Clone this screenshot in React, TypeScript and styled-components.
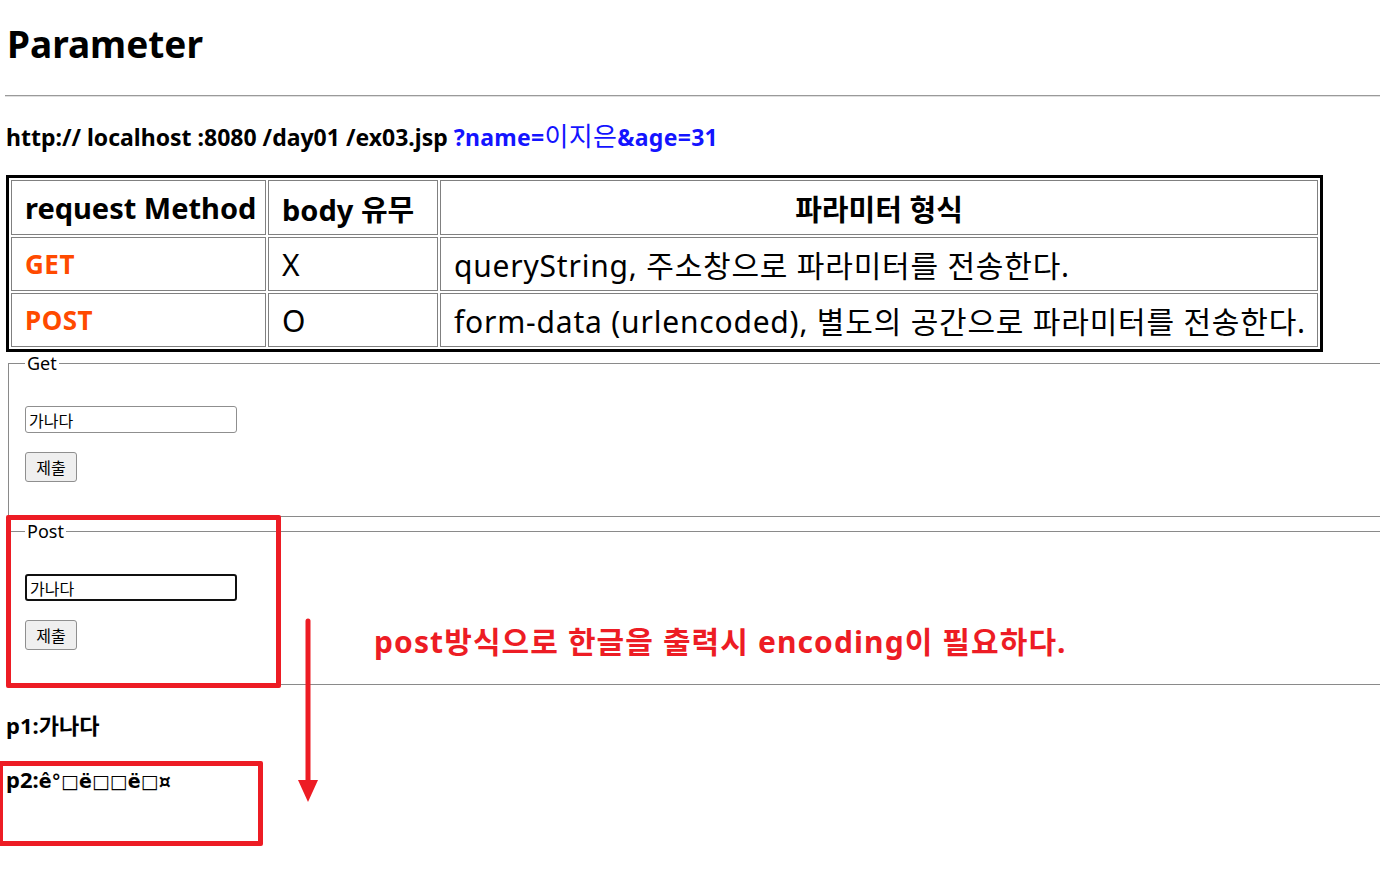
import React from "react";
import styled, { createGlobalStyle } from "styled-components";

const GlobalStyle = createGlobalStyle`
  html, body { margin: 0; padding: 0; background: #fff; }
  body {
    overflow: hidden;
    font-family: "Noto Sans", "Noto Sans CJK KR", sans-serif;
    color: #000;
  }
`;

const Page = styled.div`
  position: relative;
  width: 1380px;
  height: 876px;
  overflow: hidden;
  padding-left: 5px;
  box-sizing: border-box;
  display: flex;
  flex-direction: column;
`;

const Title = styled.h1`
  margin: 18px 0 0 2px;
  font-size: 37px;
  font-weight: 700;
  line-height: 52px;
`;

const Rule = styled.hr`
  margin: 25px 0 0 0;
  border: none;
  border-top: 1px solid #9a9a9a;
  border-bottom: 1px solid #e0e0e0;
  width: 1380px;
`;

const UrlLine = styled.div`
  margin: 23px 0 0 1px;
  font-size: 23px;
  font-weight: 700;
  line-height: 32px;
  white-space: pre;
`;

const Query = styled.span`
  color: #1414ff;
  letter-spacing: 0.3px;
`;

const QueryKo = styled.span`
  font-weight: 400;
  font-size: 26px;
`;

const Table = styled.table`
  margin: 22px 0 0 1px;
  border: 3px solid #000;
  border-spacing: 2px;
  width: 1317px;
  table-layout: fixed;
`;

const HeadCell = styled.th<{ $w?: number; $center?: boolean }>`
  border: 1px solid #808080;
  height: 55px;
  padding: 0 13px;
  font-size: 29px;
  font-weight: 700;
  text-align: ${(p) => (p.$center ? "center" : "left")};
  width: ${(p) => (p.$w ? `${p.$w}px` : "auto")};
  box-sizing: border-box;
  white-space: nowrap;
  overflow: hidden;
`;

const Cell = styled.td`
  border: 1px solid #808080;
  height: 54px;
  padding: 0 13px;
  font-size: 30px;
  font-weight: 400;
  white-space: nowrap;
  box-sizing: border-box;
  letter-spacing: 0.8px;
`;

const MethodCell = styled(Cell)`
  color: #ff4a00;
  font-weight: 700;
  font-size: 26px;
  letter-spacing: 0.5px;
`;

const Fieldset = styled.fieldset<{ $top: number }>`
  margin: ${(p) => p.$top}px 0 0 3px;
  width: 1420px;
  height: 164px;
  box-sizing: border-box;
  border: 1px solid #8a8a8a;
  padding: 0 16px;
  display: flex;
  flex-direction: column;
  align-items: flex-start;
`;

const Legend = styled.legend`
  padding: 0 2px;
  font-size: 18px;
  line-height: 20px;
`;

const TextInput = styled.input<{ $focused?: boolean }>`
  margin-top: 33px;
  width: 212px;
  height: 27px;
  box-sizing: border-box;
  border: ${(p) => (p.$focused ? "2px solid #101010" : "1px solid #8f8f8f")};
  border-radius: 3px;
  padding: 0 3px;
  font-family: "Noto Sans CJK KR", sans-serif;
  font-size: 16px;
  color: #000;
  outline: none;
  background: #fff;
`;

const SubmitButton = styled.button`
  margin-top: 19px;
  width: 52px;
  height: 30px;
  box-sizing: border-box;
  background: #efefef;
  border: 1px solid #8f8f8f;
  border-radius: 3px;
  font-family: "Noto Sans CJK KR", sans-serif;
  font-size: 16px;
  padding: 0;
  color: #000;
`;

const Result = styled.p<{ $top: number }>`
  margin: ${(p) => p.$top}px 0 0 1px;
  font-size: 22px;
  font-weight: 700;
  line-height: 30px;
`;

const Broken = styled.span`
  font-family: "DejaVu Sans", sans-serif;
  font-size: 19px;
`;

const Note = styled.div`
  position: absolute;
  left: 374px;
  top: 622px;
  color: #ed1c24;
  font-size: 30px;
  font-weight: 700;
  line-height: 40px;
  letter-spacing: 1.1px;
  white-space: nowrap;
`;

const Mark = styled.div<{ $x: number; $y: number; $w: number; $h: number }>`
  position: absolute;
  left: ${(p) => p.$x}px;
  top: ${(p) => p.$y}px;
  width: ${(p) => p.$w}px;
  height: ${(p) => p.$h}px;
  border: 5px solid #ed1c24;
  border-radius: 2px;
  box-sizing: border-box;
`;

const Arrow = styled.svg`
  position: absolute;
  left: 296px;
  top: 618px;
`;

export default function App() {
  return (
    <>
      <GlobalStyle />
      <Page>
        <Title>Parameter</Title>
        <Rule />
        <UrlLine>
          http:// localhost :8080 /day01 /ex03.jsp{" "}
          <Query>
            ?name=<QueryKo>이지은</QueryKo>&amp;age=31
          </Query>
        </UrlLine>
        <Table>
          <tbody>
            <tr>
              <HeadCell $w={255}>request Method</HeadCell>
              <HeadCell $w={170}>body 유무</HeadCell>
              <HeadCell $center>파라미터 형식</HeadCell>
            </tr>
            <tr>
              <MethodCell>GET</MethodCell>
              <Cell>X</Cell>
              <Cell>queryString, 주소창으로 파라미터를 전송한다.</Cell>
            </tr>
            <tr>
              <MethodCell>POST</MethodCell>
              <Cell>O</Cell>
              <Cell>form-data (urlencoded), 별도의 공간으로 파라미터를 전송한다.</Cell>
            </tr>
          </tbody>
        </Table>
        <Fieldset $top={1}>
          <Legend>Get</Legend>
          <TextInput defaultValue="가나다" />
          <SubmitButton>제출</SubmitButton>
        </Fieldset>
        <Fieldset $top={4}>
          <Legend>Post</Legend>
          <TextInput $focused defaultValue="가나다" />
          <SubmitButton>제출</SubmitButton>
        </Fieldset>
        <Result $top={25}>p1:가나다</Result>
        <Result $top={24}>
          p2:<Broken>ê°□ë□□ë□¤</Broken>
        </Result>

        <Mark $x={6} $y={515} $w={275} $h={173} />
        <Mark $x={-2} $y={761} $w={265} $h={85} />
        <Arrow width="24" height="188" viewBox="0 0 24 188">
          <line x1="12" y1="3" x2="12" y2="168" stroke="#ed1c24" strokeWidth="5" strokeLinecap="round" />
          <polygon points="2,162 22,162 12,184" fill="#ed1c24" />
        </Arrow>
        <Note>post방식으로 한글을 출력시 encoding이 필요하다.</Note>
      </Page>
    </>
  );
}
